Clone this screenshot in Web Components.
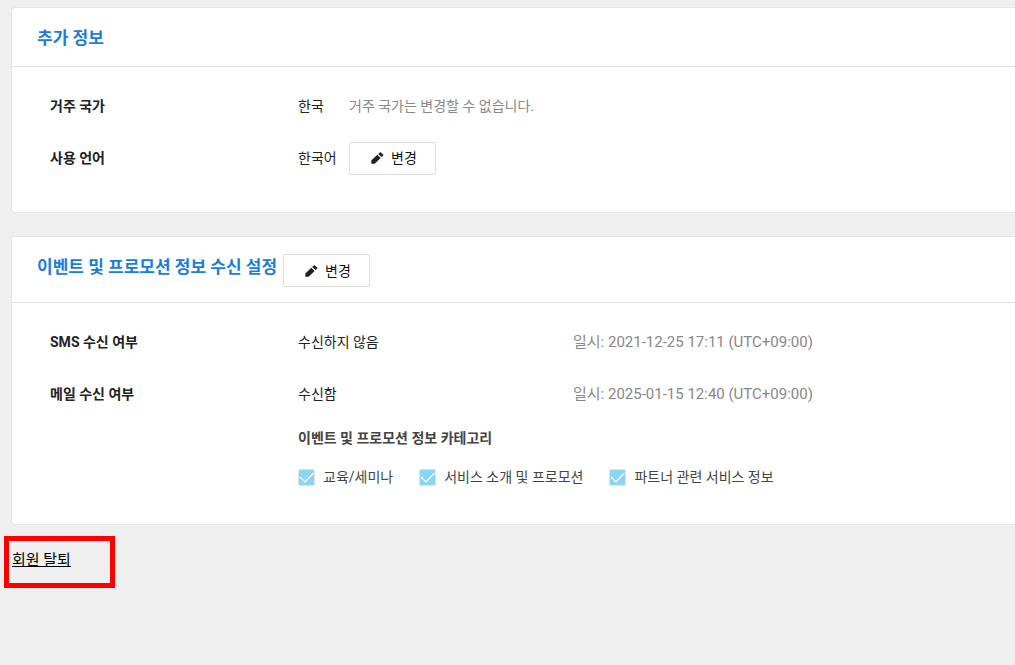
<!DOCTYPE html>
<html lang="ko">
<head>
<meta charset="utf-8">
<meta name="viewport" content="width=device-width, initial-scale=1">
<title>회원 정보</title>
<style>
    body {
        margin: 0;
        padding: 7px 0 24px;
        overflow-x: hidden;
        background-color: #efefef;
        color: #222;
        font-family: Roboto, "Noto Sans CJK KR", sans-serif;
        font-size: 14px;
        line-height: 20px;
    }
</style>
</head>
<body>
<member-page></member-page>

<script>
class InfoCard extends HTMLElement {

    constructor() {
        super();
        this.shadowDOM = this.attachShadow({mode: "open"});
    }

    connectedCallback() {
        this.render();
    }

    render() {
        this.shadowDOM.innerHTML = `
        <style>
        :host {
            display: block;
            margin: 0 0 23px 11px;
            border: 1px solid #e6e6e6;
            border-right: 0;
            border-radius: 4px 0 0 4px;
            background-color: #fff;
        }
        header {
            display: flex;
            align-items: flex-start;
            gap: 6px;
            padding: 17px 25px 15px;
            border-bottom: 1px solid #e2e2e2;
        }
        h2 {
            margin: 0;
            color: #1a7dd7;
            font-size: 17px;
            font-weight: 700;
            line-height: 26px;
        }
        .body {
            padding: 13px 38px 28px;
        }
        </style>
        <header>
            <h2>${this.getAttribute("heading")}</h2>
            <slot name="action"></slot>
        </header>
        <div class="body"><slot></slot></div>`;
    }
}

class InfoRow extends HTMLElement {

    constructor() {
        super();
        this.shadowDOM = this.attachShadow({mode: "open"});
    }

    connectedCallback() {
        this.render();
    }

    render() {
        this.shadowDOM.innerHTML = `
        <style>
        :host {
            display: grid;
            grid-template-columns: 248px 275px 1fr;
            align-items: center;
            min-height: 52px;
        }
        .label {
            font-weight: 700;
        }
        .value {
            display: flex;
            align-items: center;
            gap: 12px;
            white-space: nowrap;
        }
        .text {
            min-width: 39px;
        }
        ::slotted([slot="note"]), .date {
            color: #888;
        }
        .date {
            font-size: 15px;
        }
        </style>
        <div class="label">${this.getAttribute("label")}</div>
        <div class="value">
            <span class="text">${this.getAttribute("value")}</span>
            <slot name="note"></slot>
            <slot></slot>
        </div>
        <div class="date"><slot name="date"></slot></div>`;
    }
}

class EditButton extends HTMLElement {

    constructor() {
        super();
        this.shadowDOM = this.attachShadow({mode: "open"});
    }

    connectedCallback() {
        this.render();
    }

    render() {
        this.shadowDOM.innerHTML = `
        <style>
        :host {
            display: block;
        }
        button {
            display: flex;
            align-items: center;
            gap: 7px;
            height: 33px;
            padding: 0 18px 0 21px;
            border: 1px solid #ddd;
            border-radius: 2px;
            background-color: #fff;
            color: #111;
            font: inherit;
            cursor: pointer;
        }
        svg {
            display: block;
            fill: #222;
        }
        </style>
        <button type="button">
            <svg width="13" height="12" viewBox="0 0 13 12" aria-hidden="true">
                <path d="M0.3 11.7V8.4L6.3 2.8L9.7 6L3.7 11.7Z"/>
                <path d="M7.2 2L8.8 0.6Q9.4 0.1 10 0.6L12.1 2.6Q12.6 3.1 12.1 3.7L10.6 5.1Z"/>
            </svg>
            <slot></slot>
        </button>`;
    }
}

class CheckItem extends HTMLElement {

    constructor() {
        super();
        this.shadowDOM = this.attachShadow({mode: "open"});
    }

    connectedCallback() {
        this.render();
    }

    render() {
        this.shadowDOM.innerHTML = `
        <style>
        :host {
            display: block;
        }
        label {
            display: flex;
            align-items: center;
            gap: 8px;
            color: #444;
        }
        .box {
            display: grid;
        }
        input, svg {
            grid-area: 1 / 1;
            box-sizing: border-box;
            width: 17px;
            height: 17px;
            margin: 0;
        }
        input {
            appearance: none;
            border: 1px solid #e0e6ea;
            border-radius: 2px;
            background-color: #fff;
        }
        input:checked {
            background-color: #8ad4f5;
        }
        svg {
            visibility: hidden;
            pointer-events: none;
            fill: none;
            stroke: #fff;
            stroke-width: 1.2;
        }
        input:checked + svg {
            visibility: visible;
        }
        </style>
        <label>
            <span class="box">
                <input type="checkbox" checked>
                <svg viewBox="0 0 17 17" aria-hidden="true"><path d="M2 8L7 13L15.5 4"/></svg>
            </span>
            <slot></slot>
        </label>`;
    }
}

class CategoryList extends HTMLElement {

    constructor() {
        super();
        this.shadowDOM = this.attachShadow({mode: "open"});
    }

    connectedCallback() {
        this.render();
    }

    render() {
        this.shadowDOM.innerHTML = `
        <style>
        :host {
            display: block;
            margin-left: 248px;
            padding: 8px 0 9px;
        }
        h3 {
            margin: 0 0 19px;
            color: #444;
            font-size: 14px;
            font-weight: 700;
            line-height: 20px;
        }
        .items {
            display: flex;
            flex-wrap: wrap;
            gap: 8px 26px;
        }
        </style>
        <h3>${this.getAttribute("heading")}</h3>
        <div class="items"><slot></slot></div>`;
    }
}

class LeaveLink extends HTMLElement {

    constructor() {
        super();
        this.shadowDOM = this.attachShadow({mode: "open"});
    }

    connectedCallback() {
        this.render();
    }

    render() {
        this.shadowDOM.innerHTML = `
        <style>
        :host {
            display: block;
            width: fit-content;
            margin: -12px 0 0 4px;
            padding: 8px 39px 12px 3px;
            border: 5px solid #f00;
        }
        a {
            display: block;
            color: #000;
            font-size: 15px;
            line-height: 22px;
            text-decoration: underline;
        }
        </style>
        <a href="#leave"><slot></slot></a>`;
    }
}

class MemberPage extends HTMLElement {

    constructor() {
        super();
        this.shadowDOM = this.attachShadow({mode: "open"});
    }

    connectedCallback() {
        this.render();
    }

    render() {
        this.shadowDOM.innerHTML = `
        <style>
        :host {
            display: block;
        }
        </style>
        <main>
            <info-card heading="추가 정보">
                <info-row label="거주 국가" value="한국">
                    <span slot="note">거주 국가는 변경할 수 없습니다.</span>
                </info-row>
                <info-row label="사용 언어" value="한국어">
                    <edit-button>변경</edit-button>
                </info-row>
            </info-card>
            <info-card heading="이벤트 및 프로모션 정보 수신 설정">
                <edit-button slot="action">변경</edit-button>
                <info-row label="SMS 수신 여부" value="수신하지 않음">
                    <span slot="date">일시: 2021-12-25 17:11 (UTC+09:00)</span>
                </info-row>
                <info-row label="메일 수신 여부" value="수신함">
                    <span slot="date">일시: 2025-01-15 12:40 (UTC+09:00)</span>
                </info-row>
                <category-list heading="이벤트 및 프로모션 정보 카테고리">
                    <check-item>교육/세미나</check-item>
                    <check-item>서비스 소개 및 프로모션</check-item>
                    <check-item>파트너 관련 서비스 정보</check-item>
                </category-list>
            </info-card>
            <leave-link>회원 탈퇴</leave-link>
        </main>`;
    }
}

customElements.define("info-card", InfoCard);
customElements.define("info-row", InfoRow);
customElements.define("edit-button", EditButton);
customElements.define("check-item", CheckItem);
customElements.define("category-list", CategoryList);
customElements.define("leave-link", LeaveLink);
customElements.define("member-page", MemberPage);
</script>
</body>
</html>
